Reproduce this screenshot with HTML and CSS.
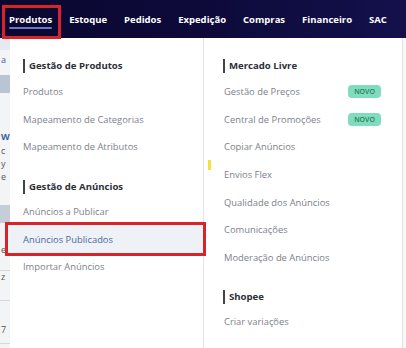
FILE: index.html
```html
<!DOCTYPE html>
<html lang="pt-BR">
<head>
<meta charset="utf-8">
<title>Menu Produtos</title>
<link rel="stylesheet" href="styles.css">
</head>
<body>
<header class="nav">
  <a class="nav-item active">Produtos</a>
  <a class="nav-item">Estoque</a>
  <a class="nav-item">Pedidos</a>
  <a class="nav-item">Expedição</a>
  <a class="nav-item">Compras</a>
  <a class="nav-item">Financeiro</a>
  <a class="nav-item">SAC</a>
</header>
<div class="stage">
  <div class="peek">
    <div class="peek-top"></div>
    <span class="peek-ch blue p1">a</span>
    <div class="peek-block b1"></div>
    <span class="peek-ch blue p2">W</span>
    <span class="peek-ch p3">c</span>
    <span class="peek-ch p4">y</span>
    <span class="peek-ch p5">e</span>
    <div class="peek-block b2"></div>
    <span class="peek-ch p6">e</span>
    <div class="peek-line l1"></div>
    <span class="peek-ch p7">z</span>
    <div class="peek-line l2"></div>
    <span class="peek-ch p8">7</span>
    <div class="peek-line l3"></div>
  </div>
  <div class="dropdown">
    <div class="col">
      <div class="group-title">Gestão de Produtos</div>
      <div class="item">Produtos</div>
      <div class="item">Mapeamento de Categorias</div>
      <div class="item">Mapeamento de Atributos</div>
      <div class="group-title second">Gestão de Anúncios</div>
      <div class="item">Anúncios a Publicar</div>
      <div class="item selected">Anúncios Publicados</div>
      <div class="item">Importar Anúncios</div>
    </div>
    <div class="col col-right">
      <div class="group-title">Mercado Livre</div>
      <div class="item">Gestão de Preços <span class="badge">NOVO</span></div>
      <div class="item">Central de Promoções <span class="badge">NOVO</span></div>
      <div class="item">Copiar Anúncios</div>
      <div class="item">Envios Flex</div>
      <div class="item">Qualidade dos Anúncios</div>
      <div class="item">Comunicações</div>
      <div class="item">Moderação de Anúncios</div>
      <div class="group-title second">Shopee</div>
      <div class="item">Criar variações</div>
      <span class="yellow-mark"></span>
    </div>
  </div>
  <div class="right-strip"></div>
  <span class="mark mark-nav"></span>
  <span class="mark mark-item"></span>
</div>
</body>
</html>
```
FILE: styles.css
```css
* { box-sizing: border-box; }
html, body { margin: 0; padding: 0; }
body {
  width: 406px;
  height: 348px;
  overflow: hidden;
  font-family: "Open Sans", "Noto Sans", sans-serif;
  background: #ffffff;
  position: relative;
}
.nav {
  height: 38px;
  display: flex;
  align-items: center;
  gap: 17px;
  padding-left: 9px;
  background: linear-gradient(90deg, #0a0730 0%, #0d0a3a 50%, #13104c 100%);
}
.nav-item {
  color: #ffffff;
  font-weight: 700;
  font-size: 9.5px;
  position: relative;
  line-height: 13px;
  white-space: nowrap;
}
.nav-item.active::after {
  content: "";
  position: absolute;
  left: 0;
  right: 0;
  bottom: -3px;
  height: 2px;
  background: #6a78c8;
  border-radius: 1px;
}
.stage {
  position: relative;
  display: flex;
  height: 310px;
}
.peek {
  width: 10px;
  background: #f3f4f6;
  position: relative;
  overflow: hidden;
}
.peek-top { height: 12px; background: #e6eaef; }
.peek-block { position: absolute; left: 0; width: 10px; height: 18px; background: #b9c5d2; }
.b1 { top: 37px; }
.b2 { top: 167px; background: #c4ced9; }
.peek-line { position: absolute; left: 0; width: 10px; height: 1px; background: #d5d8dd; }
.l1 { top: 232px; }
.l2 { top: 262px; }
.l3 { top: 305px; }
.peek-ch { position: absolute; left: 1px; font-size: 9px; line-height: 10px; color: #555; }
.peek-ch.blue { color: #3d5fa8; }
.p1 { top: 17px; }
.p2 { top: 94px; font-weight: 700; }
.p3 { top: 108px; }
.p4 { top: 121px; }
.p5 { top: 134px; }
.p6 { top: 207px; }
.p7 { top: 234px; }
.p8 { top: 287px; }
.dropdown {
  display: flex;
  width: 393px;
  background: #fff;
  border-right: 1px solid #e2e3e6;
}
.col {
  width: 193px;
  padding-top: 21px;
  display: flex;
  flex-direction: column;
  position: relative;
}
.col-right {
  width: 199px;
  border-left: 1px solid #e4e5e8;
}
.group-title {
  font-size: 9.6px;
  font-weight: 700;
  color: #2c2f38;
  height: 14px;
  line-height: 14px;
  margin-left: 13px;
  padding-left: 4px;
  border-left: 2px solid #3e4350;
  margin-bottom: 5px;
}
.col-right .group-title { margin-left: 19px; }
.group-title.second { margin-top: 19px; margin-bottom: 4px; }
.item {
  height: 27.6px;
  display: flex;
  align-items: center;
  padding-left: 13px;
  font-size: 9.4px;
  color: #7d818c;
  white-space: nowrap;
}
.col-right .item { padding-left: 20px; }
.item.selected {
  background: #eef2f7;
  color: #4d6a98;
}
.badge {
  margin-left: auto;
  margin-right: 21px;
  background: #7fdcbc;
  color: #2c7c5c;
  font-size: 7px;
  font-weight: 600;
  border-radius: 4px;
  padding: 2px 6px;
  line-height: 9px;
}
.yellow-mark {
  position: absolute;
  left: 4px;
  top: 122px;
  width: 3px;
  height: 10px;
  background: #f4e23a;
}
.right-strip { flex: 1; background: #f7f7f8; }
.mark {
  position: absolute;
  border: 3px solid #d8232a;
}
.mark-nav { left: 2px; top: -33px; width: 59px; height: 34px; }
.mark-item { left: 5px; top: 184px; width: 201px; height: 34px; }
```
